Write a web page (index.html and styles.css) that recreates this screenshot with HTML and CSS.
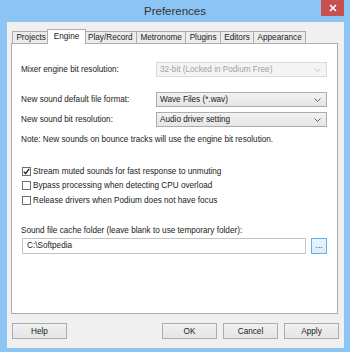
FILE: index.html
```html
<!DOCTYPE html>
<html lang="en">
<head>
    <meta charset="UTF-8">
    <title>Preferences</title>
    <link rel="stylesheet" href="styles.css">
</head>
<body>
    <div class="window">
        <div class="titlebar">
            <span class="title">Preferences</span>
            <button type="button" class="close-btn">
                <svg width="8" height="8" viewBox="0 0 8 8"><path d="M1 1L7 7M7 1L1 7" stroke="#fff" stroke-width="1.6"/></svg>
            </button>
        </div>

        <div class="client">
            <div class="tabs">
                <div class="tab">Projects</div>
                <div class="tab active">Engine</div>
                <div class="tab">Play/Record</div>
                <div class="tab">Metronome</div>
                <div class="tab">Plugins</div>
                <div class="tab">Editors</div>
                <div class="tab">Appearance</div>
            </div>

            <div class="panel">
                <div class="field-row first">
                    <span class="label">Mixer engine bit resolution:</span>
                    <div class="combo disabled">
                        <span>32-bit (Locked in Podium Free)</span>
                        <svg class="arrow" width="7" height="4" viewBox="0 0 7 4"><path d="M0.5 0.5L3.5 3.5L6.5 0.5" fill="none" stroke="#c4c4c4"/></svg>
                    </div>
                </div>

                <div class="field-row second">
                    <span class="label">New sound default file format:</span>
                    <div class="combo">
                        <span>Wave Files (*.wav)</span>
                        <svg class="arrow" width="7" height="4" viewBox="0 0 7 4"><path d="M0.5 0.5L3.5 3.5L6.5 0.5" fill="none" stroke="#606060"/></svg>
                    </div>
                </div>

                <div class="field-row">
                    <span class="label">New sound bit resolution:</span>
                    <div class="combo">
                        <span>Audio driver setting</span>
                        <svg class="arrow" width="7" height="4" viewBox="0 0 7 4"><path d="M0.5 0.5L3.5 3.5L6.5 0.5" fill="none" stroke="#606060"/></svg>
                    </div>
                </div>

                <p class="note">Note: New sounds on bounce tracks will use the engine bit resolution.</p>

                <div class="checks">
                    <label class="check">
                        <span class="box">
                            <svg width="7" height="7" viewBox="0 0 7 7"><path d="M0.8 3.6L2.6 5.6L6.2 0.9" fill="none" stroke="#222" stroke-width="1.4"/></svg>
                        </span>
                        Stream muted sounds for fast response to unmuting
                    </label>
                    <label class="check">
                        <span class="box"></span>
                        Bypass processing when detecting CPU overload
                    </label>
                    <label class="check">
                        <span class="box"></span>
                        Release drivers when Podium does not have focus
                    </label>
                </div>

                <p class="cache-label">Sound file cache folder (leave blank to use temporary folder):</p>
                <div class="path-row">
                    <div class="textbox">C:\Softpedia</div>
                    <button type="button" class="browse-btn">...</button>
                </div>
            </div>

            <div class="footer">
                <button type="button" class="btn">Help</button>
                <div class="footer-right">
                    <button type="button" class="btn">OK</button>
                    <button type="button" class="btn">Cancel</button>
                    <button type="button" class="btn">Apply</button>
                </div>
            </div>
        </div>
    </div>
</body>
</html>
```

FILE: styles.css
```css
body {
    margin: 0;
    padding: 0;
    background-color: #8cc4f3;
    font-family: "Liberation Sans", Arial, sans-serif;
    font-size: 8.2px;
    color: #1a1a1a;
}

.window {
    width: 350px;
    height: 352px;
    background-color: #8cc4f3;
    display: flex;
    flex-direction: column;
    box-sizing: border-box;
}

.titlebar {
    height: 22px;
    position: relative;
    display: flex;
    justify-content: center;
    align-items: center;
}

.title {
    font-size: 11.5px;
    color: #333;
    margin-top: -1px;
}

.close-btn {
    position: absolute;
    top: 0;
    right: 6px;
    width: 23px;
    height: 16px;
    padding: 0;
    border: none;
    background-color: #c75050;
    display: flex;
    justify-content: center;
    align-items: center;
}

.client {
    flex: 1;
    margin: 0 6px 4px 7px;
    background-color: #f0f0f0;
    padding: 7px 6px 0 4px;
    display: flex;
    flex-direction: column;
}

/* tab strip */
.tabs {
    display: flex;
    align-items: flex-end;
    height: 14px;
    padding-left: 1px;
    position: relative;
    z-index: 1;
}

.tab {
    height: 11px;
    line-height: 11px;
    padding: 0 3.4px;
    border: 1px solid #acacac;
    border-bottom: none;
    margin-right: -1px;
    background-color: #ececec;
    color: #1a1a1a;
}

.tab.active {
    height: 14px;
    line-height: 13px;
    margin: 0 -2px -1px -2px;
    padding: 0 5.4px;
    background-color: #fff;
    position: relative;
    z-index: 2;
}

.tab.active + .tab {
    margin-left: 0;
}

.panel {
    height: 271px;
    box-sizing: border-box;
    background-color: #fff;
    border: 1px solid #acacac;
    padding: 18px 10px 0 9px;
}

/* combo rows */
.field-row {
    display: flex;
    align-items: center;
    justify-content: space-between;
    height: 15px;
    margin-top: 5px;
}

.field-row.first {
    margin-top: 0;
}

.field-row.second {
    margin-top: 15px;
}

.combo {
    width: 171px;
    height: 15px;
    box-sizing: border-box;
    border: 1px solid #acacac;
    background: linear-gradient(#f2f2f2, #e5e5e5);
    display: flex;
    align-items: center;
    justify-content: space-between;
    padding: 0 5px 0 3px;
}

.combo.disabled {
    background: #f4f4f4;
    border-color: #d9d9d9;
    color: #a3a3a3;
}

.note {
    margin: 7px 0 0 0;
    line-height: 12px;
}

.checks {
    margin-top: 18px;
    margin-left: 1px;
}

.check {
    display: flex;
    align-items: center;
    height: 14.5px;
}

.box {
    width: 9px;
    height: 9px;
    box-sizing: border-box;
    border: 1px solid #707070;
    background-color: #fff;
    margin-right: 2px;
    display: flex;
    justify-content: center;
    align-items: center;
}

.cache-label {
    margin: 17px 0 0 0;
    line-height: 12px;
}

.path-row {
    display: flex;
    align-items: center;
    margin-top: 1px;
    margin-left: 1px;
}

.textbox {
    width: 285px;
    height: 16px;
    box-sizing: border-box;
    border: 1px solid #c3c3c3;
    padding: 0 4px;
    line-height: 14px;
}

.browse-btn {
    width: 16px;
    height: 16px;
    margin-left: 5px;
    padding: 0;
    border: 1px solid #68aee8;
    background: linear-gradient(#eaf5fd, #d8ecfb);
    font-family: inherit;
    font-size: 8.2px;
    line-height: 12px;
    color: #333;
}

/* bottom buttons */
.footer {
    display: flex;
    justify-content: space-between;
    margin-top: 9px;
    padding-left: 1px;
}

.footer-right {
    display: flex;
    gap: 6px;
    margin-right: -1px;
}

.btn {
    width: 55px;
    height: 16px;
    padding: 0;
    border: 1px solid #acacac;
    background: linear-gradient(#f0f0f0, #e5e5e5);
    font-family: inherit;
    font-size: 8.2px;
    color: #1a1a1a;
}
```
